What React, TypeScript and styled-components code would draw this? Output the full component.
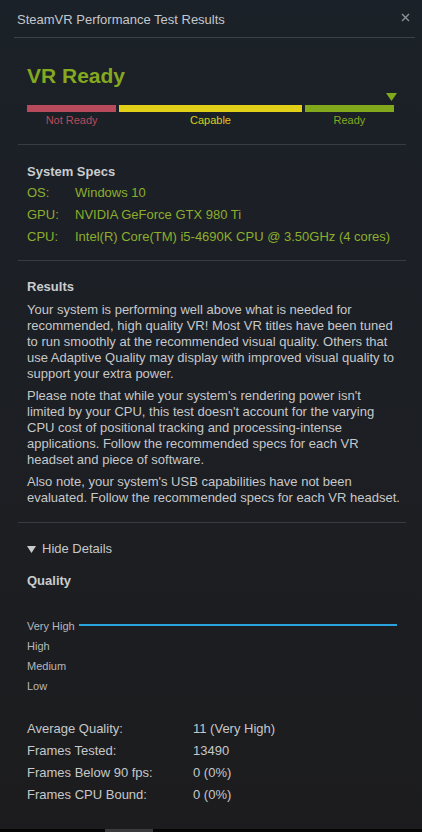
import React from 'react';
import styled, { createGlobalStyle } from 'styled-components';

const GlobalStyle = createGlobalStyle`
  html, body {
    margin: 0;
    padding: 0;
    background: #1c1c1e;
  }
  body {
    font-family: 'Liberation Sans', Arial, sans-serif;
    -webkit-font-smoothing: antialiased;
  }
`;

type Level = 'bad' | 'mid' | 'good';

const levelColors: Record<Level, { bar: string; text: string }> = {
  bad: { bar: '#b84b5b', text: '#b84b5b' },
  mid: { bar: '#e2cf17', text: '#dccb1c' },
  good: { bar: '#82a91b', text: '#84a820' },
};

const specs = [
  { label: 'OS:', value: 'Windows 10' },
  { label: 'GPU:', value: 'NVIDIA GeForce GTX 980 Ti' },
  { label: 'CPU:', value: 'Intel(R) Core(TM) i5-4690K CPU @ 3.50GHz (4 cores)' },
];

// lines kept as in the client so the wrapping matches
const paragraphs = [
  [
    'Your system is performing well above what is needed for',
    'recommended, high quality VR! Most VR titles have been tuned',
    'to run smoothly at the recommended visual quality. Others that',
    'use Adaptive Quality may display with improved visual quality to',
    'support your extra power.',
  ],
  [
    "Please note that while your system's rendering power isn't",
    "limited by your CPU, this test doesn't account for the varying",
    'CPU cost of positional tracking and processing-intense',
    'applications. Follow the recommended specs for each VR',
    'headset and piece of software.',
  ],
  [
    "Also note, your system's USB capabilities have not been",
    'evaluated. Follow the recommended specs for each VR headset.',
  ],
];

const stats = [
  { label: 'Average Quality:', value: '11 (Very High)' },
  { label: 'Frames Tested:', value: '13490' },
  { label: 'Frames Below 90 fps:', value: '0 (0%)' },
  { label: 'Frames CPU Bound:', value: '0 (0%)' },
];

const qualityLevels = ['Very High', 'High', 'Medium', 'Low'];

const App: React.FC = () => {
  return (
    <>
      <GlobalStyle />
      <Window>
        <Header>
          <Title>SteamVR Performance Test Results</Title>
          <CloseButton aria-label="Close">
            <svg width="9" height="9" viewBox="0 0 9 9">
              <path d="M1 1L8 8M8 1L1 8" stroke="#8d9297" strokeWidth="1.4" />
            </svg>
          </CloseButton>
        </Header>

        <Body>
          <Verdict>VR Ready</Verdict>
          <Meter>
            <Marker>
              <svg width="11" height="8" viewBox="0 0 11 8">
                <path d="M0 0H11L5.5 8Z" fill="#82a91b" />
              </svg>
            </Marker>
            <Bars>
              <Segment level="bad" grow={89} />
              <Segment level="mid" grow={182} />
              <Segment level="good" grow={89} />
            </Bars>
            <Labels>
              <SegmentLabel level="bad" grow={89}>Not Ready</SegmentLabel>
              <SegmentLabel level="mid" grow={182}>Capable</SegmentLabel>
              <SegmentLabel level="good" grow={89}>Ready</SegmentLabel>
            </Labels>
          </Meter>
        </Body>

        <Divider />

        <Body>
          <Heading top={19}>System Specs</Heading>
          <SpecList>
            {specs.map((s) => (
              <SpecRow key={s.label}>
                <span>{s.label}</span>
                <span>{s.value}</span>
              </SpecRow>
            ))}
          </SpecList>
        </Body>

        <Divider />

        <Body>
          <Heading top={18}>Results</Heading>
          <Paragraphs>
            {paragraphs.map((lines) => (
              <Paragraph key={lines[0]}>
                {lines.map((line, i) => (
                  <React.Fragment key={line}>
                    {i > 0 && <br />}
                    {line}
                  </React.Fragment>
                ))}
              </Paragraph>
            ))}
          </Paragraphs>
        </Body>

        <Divider />

        <Body>
          <Toggle>
            <svg width="9" height="7" viewBox="0 0 9 7">
              <path d="M0 0H9L4.5 7Z" fill="#c8cacc" />
            </svg>
            Hide Details
          </Toggle>
          <Heading top={16}>Quality</Heading>
          <Chart>
            {qualityLevels.map((q, i) => (
              <ChartRow key={q}>
                <ChartLabel>{q}</ChartLabel>
                {i === 0 && <ChartLine />}
              </ChartRow>
            ))}
          </Chart>
          <Stats>
            {stats.map((s) => (
              <StatRow key={s.label}>
                <span>{s.label}</span>
                <span>{s.value}</span>
              </StatRow>
            ))}
          </Stats>
        </Body>

        <Spacer />
        <Taskbar>
          <TaskThumb />
        </Taskbar>
      </Window>
    </>
  );
};

const Window = styled.div`
  width: 422px;
  height: 832px;
  display: flex;
  flex-direction: column;
  background: linear-gradient(to bottom, #1b2128 0%, #1c1f24 45%, #1c1c1e 100%);
  overflow: hidden;
`;

const Header = styled.div`
  height: 37px;
  margin: 0 7px 0 14px;
  padding-left: 3px;
  display: flex;
  align-items: center;
  justify-content: space-between;
  border-bottom: 1px solid #3c4348;
`;

const Title = styled.div`
  font-size: 13px;
  color: #c3c7cb;
  padding-top: 2px;
`;

const CloseButton = styled.button`
  border: 0;
  background: none;
  padding: 0;
  margin-right: 5px;
  margin-top: -2px;
  display: flex;
  cursor: pointer;
`;

const Body = styled.div`
  padding: 0 19px 0 27px;
  display: flex;
  flex-direction: column;
`;

const Verdict = styled.div`
  margin-top: 26px;
  font-size: 21px;
  line-height: 24px;
  font-weight: bold;
  color: #84a820;
`;

const Meter = styled.div`
  width: 367px;
  margin-top: 5px;
  display: flex;
  flex-direction: column;
`;

const Marker = styled.div`
  display: flex;
  justify-content: flex-end;
  height: 8px;
  margin-right: -3px;
`;

const Bars = styled.div`
  display: flex;
  gap: 3px;
  margin-top: 4px;
`;

const Segment = styled.div<{ level: Level; grow: number }>`
  flex: ${(p) => p.grow} 0 0;
  height: 7px;
  background: ${(p) => levelColors[p.level].bar};
`;

const Labels = styled.div`
  display: flex;
  gap: 3px;
  margin-top: 1px;
`;

const SegmentLabel = styled.div<{ level: Level; grow: number }>`
  flex: ${(p) => p.grow} 0 0;
  text-align: center;
  font-size: 11px;
  line-height: 14px;
  color: ${(p) => levelColors[p.level].text};
`;

const Divider = styled.hr`
  border: 0;
  border-top: 1px solid #363c41;
  margin: 17px 16px 0 18px;
  height: 0;
`;

const Heading = styled.div<{ top: number }>`
  margin-top: ${(p) => p.top}px;
  font-size: 13px;
  line-height: 16px;
  font-weight: bold;
  color: #caccce;
`;

const SpecList = styled.div`
  margin-top: 2px;
  margin-bottom: -5px;
  display: flex;
  flex-direction: column;
`;

const SpecRow = styled.div`
  display: grid;
  grid-template-columns: 48px 1fr;
  font-size: 13px;
  line-height: 22px;
  color: #8cae2c;
  white-space: nowrap;
`;

const Paragraphs = styled.div`
  margin-top: 7px;
  display: flex;
  flex-direction: column;
  gap: 6px;
  margin-bottom: -1px;
`;

const Paragraph = styled.p`
  margin: 0;
  font-size: 13px;
  line-height: 16px;
  color: #c6c8ca;
  white-space: nowrap;
`;

const Toggle = styled.div`
  margin-top: 18px;
  display: flex;
  align-items: center;
  gap: 6px;
  font-size: 13px;
  line-height: 16px;
  color: #c6c8ca;
`;

const Chart = styled.div`
  margin-top: 27px;
  margin-right: 8px;
  display: flex;
  flex-direction: column;
`;

const ChartRow = styled.div`
  display: flex;
  align-items: center;
  height: 20px;
`;

const ChartLabel = styled.span`
  font-size: 11px;
  color: #b6b8ba;
`;

const ChartLine = styled.div`
  flex: 1;
  height: 2px;
  margin: -2px -2px 0 4px;
  background: #2aa4dc;
`;

const Stats = styled.div`
  margin-top: 22px;
  display: flex;
  flex-direction: column;
`;

const StatRow = styled.div`
  display: grid;
  grid-template-columns: 166px 1fr;
  font-size: 13px;
  line-height: 22px;
  color: #c6c8ca;
`;

const Spacer = styled.div`
  flex: 1;
`;

const Taskbar = styled.div`
  height: 3px;
  background: #050505;
`;

const TaskThumb = styled.div`
  width: 48px;
  height: 3px;
  margin-left: 105px;
  background: #3a3a3c;
`;

export default App;
